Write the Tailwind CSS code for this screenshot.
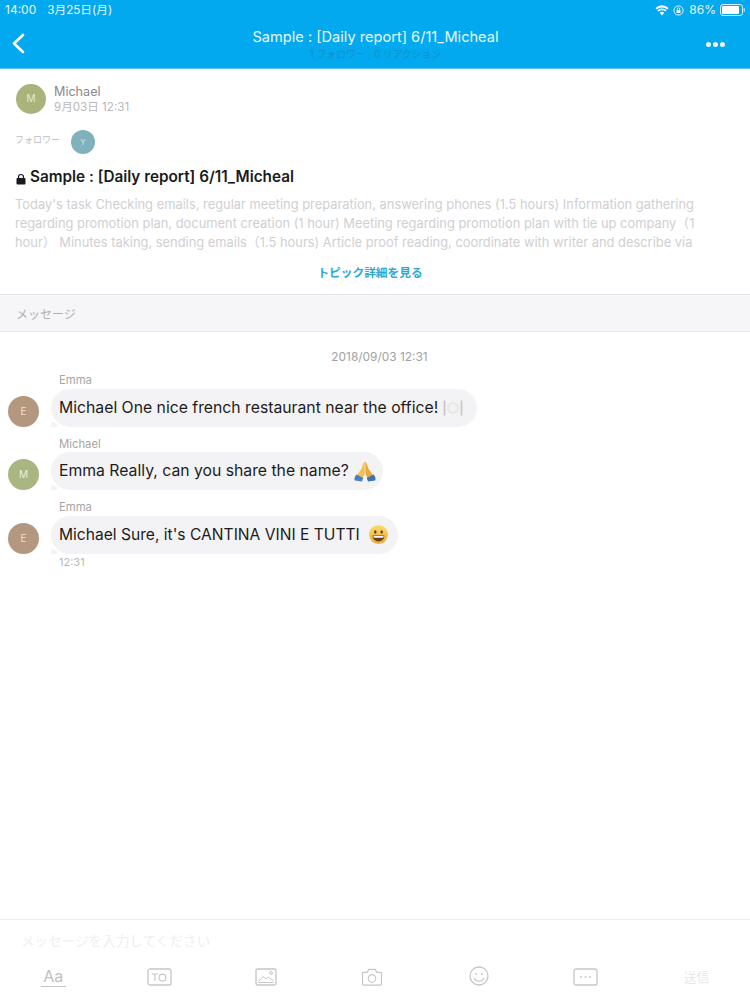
<!DOCTYPE html>
<html lang="ja">
<head>
<meta charset="utf-8">
<script src="https://cdn.jsdelivr.net/npm/@tailwindcss/browser@4"></script>
</head>
<body class="bg-white">
<div class="w-[750px] h-[1000px] flex flex-col overflow-hidden bg-white font-['Inter','Noto_Sans_CJK_JP',sans-serif]">
  <!-- Header -->
  <header class="h-[69px] shrink-0 bg-[#03a9ee] border-b border-[#5cc8f2] text-white relative">
    <div class="h-[20px] flex items-center justify-between pl-[5px] pr-[4px] text-[12px] leading-[20px] text-[#e6f6fd]">
      <div class="flex gap-[11px]"><span>14:00</span><span class="text-[11.7px]">3月25日(月)</span></div>
      <div class="flex items-center gap-[4px]">
        <svg width="14" height="11" viewBox="0 0 14 11"><path d="M7 10.5 L4.8 7.8 A3.4 3.4 0 0 1 9.2 7.8Z M3.6 6.6 L2.4 5.2 A7 7 0 0 1 11.6 5.2 L10.4 6.6 A5.2 5.2 0 0 0 3.6 6.6Z M1.7 4.4 L0.4 3 A9.6 9.6 0 0 1 13.6 3 L12.3 4.4 A8 8 0 0 0 1.7 4.4Z" fill="#fff"/></svg>
        <svg width="11" height="11" viewBox="0 0 11 11"><circle cx="5.5" cy="5.5" r="4.6" fill="none" stroke="#e6f6fd" stroke-width="1"/><rect x="3.5" y="5" width="4" height="3" fill="#e6f6fd"/><path d="M4.3 5V4a1.2 1.2 0 0 1 2.4 0v1" fill="none" stroke="#e6f6fd" stroke-width=".8"/></svg>
        <span class="ml-[1px]">86%</span>
        <svg width="26" height="12" viewBox="0 0 26 12"><rect x=".5" y=".5" width="22" height="11" rx="2.5" fill="none" stroke="#d5f0fc"/><rect x="2" y="2" width="17" height="8" rx="1" fill="#fff"/><rect x="23.5" y="4" width="1.5" height="4" rx=".7" fill="#9fdcf6"/></svg>
      </div>
    </div>
    <div class="flex items-start justify-between h-[48px] pl-[11px] pr-[25px]">
      <svg class="mt-[13px]" width="14" height="21" viewBox="0 0 14 21"><path d="M12 2 L3 10.5 L12 19" fill="none" stroke="#fff" stroke-width="2.6" stroke-linecap="round" stroke-linejoin="round"/></svg>
      <div class="flex flex-col items-center ml-[20px]">
        <div class="text-[14.6px] leading-[20px] mt-[7px] text-[#e8f7fd]">Sample : [Daily report] 6/11_Micheal</div>
        <div class="text-[9.8px] leading-[12px] mt-[2px] text-[#1a8cc4]">1 フォロワー , 0 リアクション</div>
      </div>
      <div class="flex gap-[2px] mt-[22px]">
        <span class="w-[5px] h-[5px] rounded-full bg-[#eaf8fe]"></span>
        <span class="w-[5px] h-[5px] rounded-full bg-[#eaf8fe]"></span>
        <span class="w-[5px] h-[5px] rounded-full bg-[#eaf8fe]"></span>
      </div>
    </div>
  </header>

  <!-- Topic -->
  <section class="h-[226px] shrink-0 px-[15px] border-b border-[#e4e4e6]">
    <div class="flex items-center gap-[8px] pl-[1px] pt-[13px]">
      <div class="w-[30px] h-[30px] rounded-full bg-[#aab37c] flex items-center justify-center text-[10px] text-[#e4e8d2]">M</div>
      <div class="pt-[2px]">
        <div class="text-[12.6px] leading-[16px] text-[#8a8a8a]">Michael</div>
        <div class="text-[11.6px] leading-[15px] text-[#b9b9b9]">9月03日 12:31</div>
      </div>
    </div>
    <div class="flex items-center gap-[10px] mt-[15px]">
      <span class="text-[9px] w-[46px] leading-[12px] -mt-[4px] text-[#bdbdbd] whitespace-nowrap">フォロワー</span>
      <div class="w-[24px] h-[24px] rounded-full bg-[#7fb2ba] flex items-center justify-center text-[8px] text-[#d8eaec]">Y</div>
    </div>
    <h1 class="flex items-center mt-[13px] text-[15.3px] leading-[20px] font-semibold text-[#1a1a1a] whitespace-nowrap">
      <svg class="mt-[3px] mr-[3px]" width="12" height="12" viewBox="0 0 12 12"><rect x="1.5" y="5" width="9" height="6.5" rx="1" fill="#1a1a1a"/><path d="M3.5 5.5V4a2.5 2.5 0 0 1 5 0v1.5" fill="none" stroke="#1a1a1a" stroke-width="1.2"/></svg>
      Sample : [Daily report] 6/11_Micheal
    </h1>
    <p class="mt-[8px] w-[716px] text-[12.88px] leading-[19px] text-[#d0d0d2] whitespace-nowrap">Today's task Checking emails, regular meeting preparation, answering phones (1.5 hours) Information gathering<br>regarding promotion plan, document creation (1 hour) Meeting regarding promotion plan with tie up company（1<br>hour） Minutes taking, sending emails（1.5 hours) Article proof reading, coordinate with writer and describe via</p>
    <div class="mt-[13px] pr-[10px] text-center text-[11.7px] leading-[16px] font-semibold text-[#2ea8d2]">トピック詳細を見る</div>
  </section>

  <!-- Section title -->
  <div class="h-[37px] shrink-0 bg-[#f6f6f8] border-b border-[#e6e6e8] px-[16px] pt-[3px] flex items-center text-[12px] text-[#b0b0b0]">メッセージ</div>

  <!-- Messages -->
  <main class="flex-1 min-h-0">
    <div class="text-center text-[11.9px] leading-[14px] mt-[18px] text-[#a2a2a2] pl-[9px]">2018/09/03 12:31</div>
    <div class="mt-[9px] pl-[8px] flex flex-col">
      <div>
        <div class="pl-[51px] text-[11.3px] leading-[14px] text-[#a6a6a6]">Emma</div>
        <div class="flex items-end gap-[12px] mt-[1.5px]">
          <div class="w-[31px] h-[31px] rounded-full bg-[#b3977f] flex items-center justify-center text-[10px] text-[#e9e0d7]">E</div>
          <div class="relative h-[38px] pl-[8px] pr-[14px] rounded-[19px] bg-[#f3f3f5] flex items-center text-[15.75px] text-[#1c1c1c] whitespace-nowrap">Michael One nice french restaurant near the office!
            <svg class="ml-[5px]" width="20" height="18" viewBox="0 0 20 18"><circle cx="10" cy="9" r="6" fill="#e6e6e6"/><circle cx="10" cy="9" r="4" fill="#f2f2f2"/><path d="M1.5 1.5v15M18.5 1.5v15" stroke="#c4c4c4" stroke-width="1.6"/></svg>
            <svg class="absolute -left-[1px] bottom-0" width="8" height="8" viewBox="0 0 8 8"><path d="M0 8 Q2 6.5 2 2 L8 6 L6 8Z" fill="#f3f3f5"/></svg>
          </div>
        </div>
      </div>
      <div class="mt-[10px]">
        <div class="pl-[51px] text-[11.3px] leading-[14px] text-[#a6a6a6]">Michael</div>
        <div class="flex items-end gap-[12px] mt-[1.5px]">
          <div class="w-[31px] h-[31px] rounded-full bg-[#a9b682] flex items-center justify-center text-[10px] text-[#e9eddc]">M</div>
          <div class="relative h-[38px] pl-[8px] pr-[7px] rounded-[19px] bg-[#f3f3f5] flex items-center text-[15.75px] text-[#1c1c1c] whitespace-nowrap">Emma Really, can you share the name?
            <svg class="ml-[5px]" width="22" height="21" viewBox="0 0 22 21"><path d="M10.7 0.5 C9 1.5 8.6 5 7.4 8 L3.5 13.5 L1.5 16 L8.5 18 L10.7 12Z" fill="#f5c04f"/><path d="M11.3 0.5 C13 1.5 13.4 5 14.6 8 L18.5 13.5 L20.5 16 L13.5 18 L11.3 12Z" fill="#eda93c"/><path d="M2.5 13.5 L9.3 17 L8 20.5 L0.8 19.5 Q-.3 16 2.5 13.5Z" fill="#4a80c0"/><path d="M19.5 13.5 L12.7 17 L14 20.5 L21.2 19.5 Q22.3 16 19.5 13.5Z" fill="#3f74b3"/></svg>
            <svg class="absolute -left-[1px] bottom-0" width="8" height="8" viewBox="0 0 8 8"><path d="M0 8 Q2 6.5 2 2 L8 6 L6 8Z" fill="#f3f3f5"/></svg>
          </div>
        </div>
      </div>
      <div class="mt-[10px]">
        <div class="pl-[51px] text-[11.3px] leading-[14px] text-[#a6a6a6]">Emma</div>
        <div class="flex items-end gap-[12px] mt-[1.5px]">
          <div class="w-[31px] h-[31px] rounded-full bg-[#b3977f] flex items-center justify-center text-[10px] text-[#e9e0d7]">E</div>
          <div class="relative h-[38px] pl-[8px] pr-[10px] rounded-[19px] bg-[#f3f3f5] flex items-center text-[15.6px] text-[#1c1c1c] whitespace-nowrap">Michael Sure, it's CANTINA VINI E TUTTI
            <svg class="ml-[9px]" width="19" height="19" viewBox="0 0 19 19"><defs><linearGradient id="g" x1="0" y1="0" x2="0" y2="1"><stop offset="0" stop-color="#fbdc6a"/><stop offset="1" stop-color="#f2a93b"/></linearGradient></defs><circle cx="9.5" cy="9.5" r="9.5" fill="url(#g)"/><ellipse cx="6.3" cy="7" rx="1.2" ry="1.7" fill="#5b3b16"/><ellipse cx="12.7" cy="7" rx="1.2" ry="1.7" fill="#5b3b16"/><path d="M3.5 10.5h12a6 6 0 0 1-12 0Z" fill="#6b3d16"/><path d="M4.3 11h10.4a5.5 5.5 0 0 1-.6 1.8H4.9A5.5 5.5 0 0 1 4.3 11Z" fill="#fff"/></svg>
            <svg class="absolute -left-[1px] bottom-0" width="8" height="8" viewBox="0 0 8 8"><path d="M0 8 Q2 6.5 2 2 L8 6 L6 8Z" fill="#f3f3f5"/></svg>
          </div>
        </div>
        <div class="pl-[51px] text-[11px] leading-[14px] mt-[1px] text-[#b8b8b8]">12:31</div>
      </div>
    </div>
  </main>

  <!-- Composer -->
  <footer class="h-[81px] shrink-0 border-t border-[#efeff0]">
    <div class="pl-[21px] pt-[12px] text-[13.6px] leading-[18px] text-[#efefef]">メッセージを入力してください</div>
    <div class="mt-[18px] grid grid-cols-[repeat(7,106.4px)] justify-items-center items-start">
      <div class="w-[25px] border-b border-[#c6c6c6] text-center text-[16px] leading-[17px] text-[#c0c0c0] h-[19px]">Aa</div>
      <svg width="25" height="18" viewBox="0 0 25 18"><rect x="1" y="1" width="23" height="16" rx="2" fill="none" stroke="#c6c6c6" stroke-width="1.3"/><path d="M5 6h6M8 6v7" stroke="#c6c6c6" stroke-width="1.1" fill="none"/><circle cx="15.5" cy="9.5" r="3.4" fill="none" stroke="#c6c6c6" stroke-width="1.1"/></svg>
      <svg width="22" height="18" viewBox="0 0 22 18"><rect x="1" y="1" width="20" height="16" rx="1.5" fill="none" stroke="#c6c6c6" stroke-width="1.3"/><path d="M3.5 13.5 L8 8.5 L11 11 L13.5 9 L18.5 13 M3.5 14.5h15" fill="none" stroke="#c6c6c6" stroke-width="1"/><circle cx="16" cy="5" r="1.4" fill="none" stroke="#c6c6c6"/></svg>
      <svg width="22" height="18" viewBox="0 0 22 19"><path d="M1 5.5a1 1 0 0 1 1-1h4l1.6-3h6.8l1.6 3h4a1 1 0 0 1 1 1V17a1 1 0 0 1-1 1H2a1 1 0 0 1-1-1Z" fill="none" stroke="#c6c6c6" stroke-width="1.3"/><circle cx="11" cy="11" r="4" fill="none" stroke="#c6c6c6" stroke-width="1.2"/></svg>
      <svg class="-mt-[2px]" width="20" height="20" viewBox="0 0 20 20"><circle cx="10" cy="10" r="9" fill="none" stroke="#c6c6c6" stroke-width="1.3"/><circle cx="7" cy="8" r="1" fill="#c6c6c6"/><circle cx="13" cy="8" r="1" fill="#c6c6c6"/><path d="M5 12a5.5 5.5 0 0 0 10 0" fill="none" stroke="#c6c6c6" stroke-width="1.2"/></svg>
      <svg width="25" height="18" viewBox="0 0 25 18"><rect x="1" y="1" width="23" height="16" rx="2" fill="none" stroke="#c6c6c6" stroke-width="1.3"/><circle cx="8" cy="9" r=".9" fill="#c6c6c6"/><circle cx="12.5" cy="9" r=".9" fill="#c6c6c6"/><circle cx="17" cy="9" r=".9" fill="#c6c6c6"/></svg>
      <span class="text-[12.8px] leading-[20px] ml-[10px] text-[#e8e8e8]">送信</span>
    </div>
  </footer>
</div>
</body>
</html>
